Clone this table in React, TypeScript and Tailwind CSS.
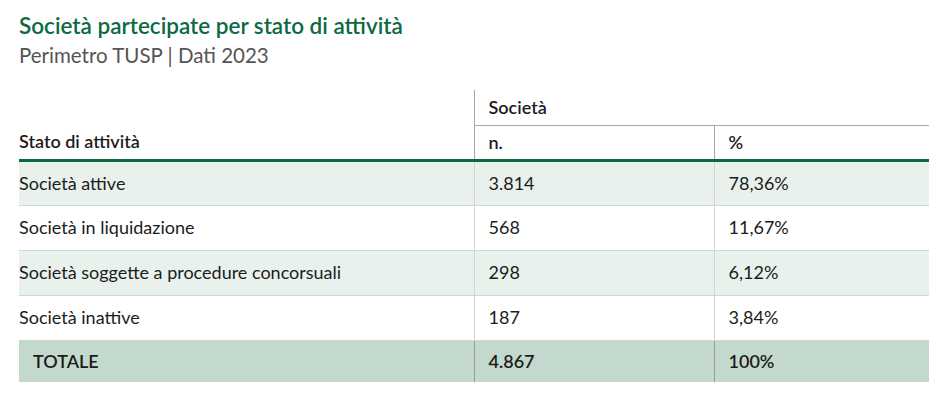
const rows = [
  { label: 'Società attive', n: '3.814', pct: '78,36%', shaded: true },
  { label: 'Società in liquidazione', n: '568', pct: '11,67%', shaded: false },
  { label: 'Società soggette a procedure concorsuali', n: '298', pct: '6,12%', shaded: true },
  { label: 'Società inattive', n: '187', pct: '3,84%', shaded: false },
];

export default function App() {
  return (
    <div
      className="w-[952px] h-[407px] bg-white pl-[19px] pt-[11px] text-[#1c1c1c]"
      style={{ fontFamily: 'Lato, "Noto Sans", sans-serif' }}
    >
      <h1 className="text-[22.5px] leading-[30px] text-[#0b6a41] font-semibold">
        Società partecipate per stato di attività
      </h1>
      <p className="text-[20.5px] leading-[28px] text-[#555555]">Perimetro TUSP | Dati 2023</p>

      <table className="mt-[21px] w-[910px] border-collapse text-[18px] table-fixed">
        <colgroup>
          <col className="w-[455px]" />
          <col className="w-[240px]" />
          <col className="w-[215px]" />
        </colgroup>
        <thead>
          <tr className="h-[35px]">
            <th className="p-0" />
            <th
              colSpan={2}
              className="p-0 pl-[14px] text-left font-semibold border-l border-[#a8a8a8] border-b align-middle"
            >
              Società
            </th>
          </tr>
          <tr className="h-[35px] border-b-[3px] border-[#0b6a41]">
            <th className="p-0 text-left font-semibold align-middle">Stato di attività</th>
            <th className="p-0 pl-[14px] text-left font-semibold border-l border-t border-[#a8a8a8]">n.</th>
            <th className="p-0 pl-[14px] text-left font-semibold border-l border-t border-[#a8a8a8]">%</th>
          </tr>
        </thead>
        <tbody>
          {rows.map((r) => (
            <tr
              key={r.label}
              className={`h-[45px] border-b border-[#d4d4d4] ${r.shaded ? 'bg-[#e8f1ec]' : 'bg-white'}`}
            >
              <td className="p-0">{r.label}</td>
              <td className="p-0 pl-[14px] border-l border-[#d4d4d4]">{r.n}</td>
              <td className="p-0 pl-[14px] border-l border-[#d4d4d4]">{r.pct}</td>
            </tr>
          ))}
          <tr className="h-[42px] bg-[#c4d9cd] font-semibold">
            <td className="p-0 pl-[14px]">TOTALE</td>
            <td className="p-0 pl-[14px] border-l border-[#9a9a9a]">4.867</td>
            <td className="p-0 pl-[14px] border-l border-[#9a9a9a]">100%</td>
          </tr>
        </tbody>
      </table>
    </div>
  );
}
